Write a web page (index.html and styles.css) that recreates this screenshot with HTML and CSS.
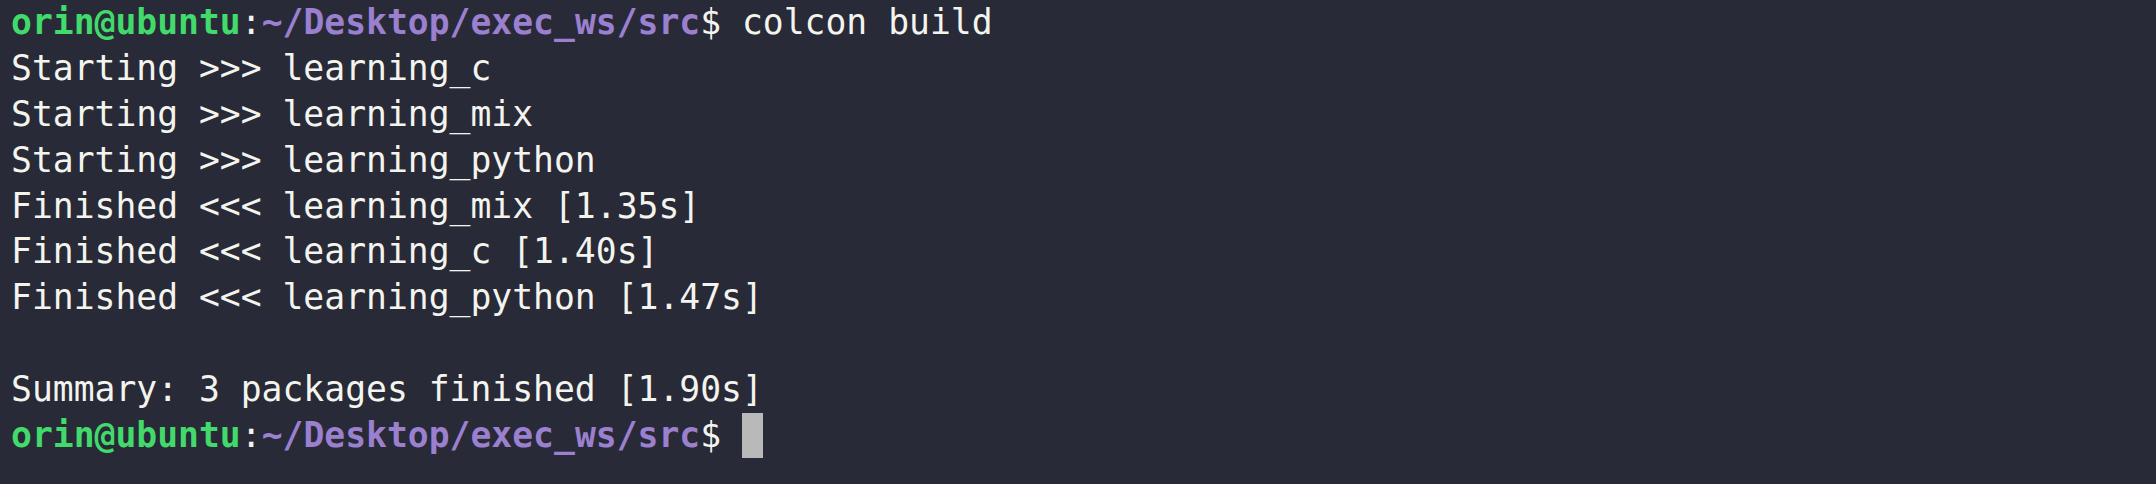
FILE: index.html
```html
<!DOCTYPE html>
<html>
<head>
<meta charset="utf-8">
<link rel="stylesheet" href="styles.css">
</head>
<body>
<div class="term">
<div class="line"><span class="user">orin@ubuntu</span>:<span class="path">~/Desktop/exec_ws/src</span>$ colcon build</div>
<div class="line">Starting &gt;&gt;&gt; learning_c</div>
<div class="line">Starting &gt;&gt;&gt; learning_mix</div>
<div class="line">Starting &gt;&gt;&gt; learning_python</div>
<div class="line">Finished &lt;&lt;&lt; learning_mix [1.35s]</div>
<div class="line">Finished &lt;&lt;&lt; learning_c [1.40s]</div>
<div class="line">Finished &lt;&lt;&lt; learning_python [1.47s]</div>
<div class="line"> </div>
<div class="line">Summary: 3 packages finished [1.90s]</div>
<div class="line"><span class="user">orin@ubuntu</span>:<span class="path">~/Desktop/exec_ws/src</span>$ <span class="cursor"> </span></div>
</div>
</body>
</html>
```
FILE: styles.css
```css
html, body {
  margin: 0;
  padding: 0;
  background: #282a37;
  height: 100%;
}
.term {
  padding: 0 0 0 11px;
  font-family: "DejaVu Sans Mono", monospace;
  font-size: 34.7px;
  color: #f4f4ee;
}
.line {
  height: 45.9px;
  line-height: 45.9px;
  white-space: pre;
}
.user {
  color: #41da6b;
  font-weight: bold;
}
.path {
  color: #9b80d0;
  font-weight: bold;
}
.cursor {
  display: inline-block;
  width: 21px;
  height: 45px;
  vertical-align: top;
  background: #b9b9b9;
}
```
